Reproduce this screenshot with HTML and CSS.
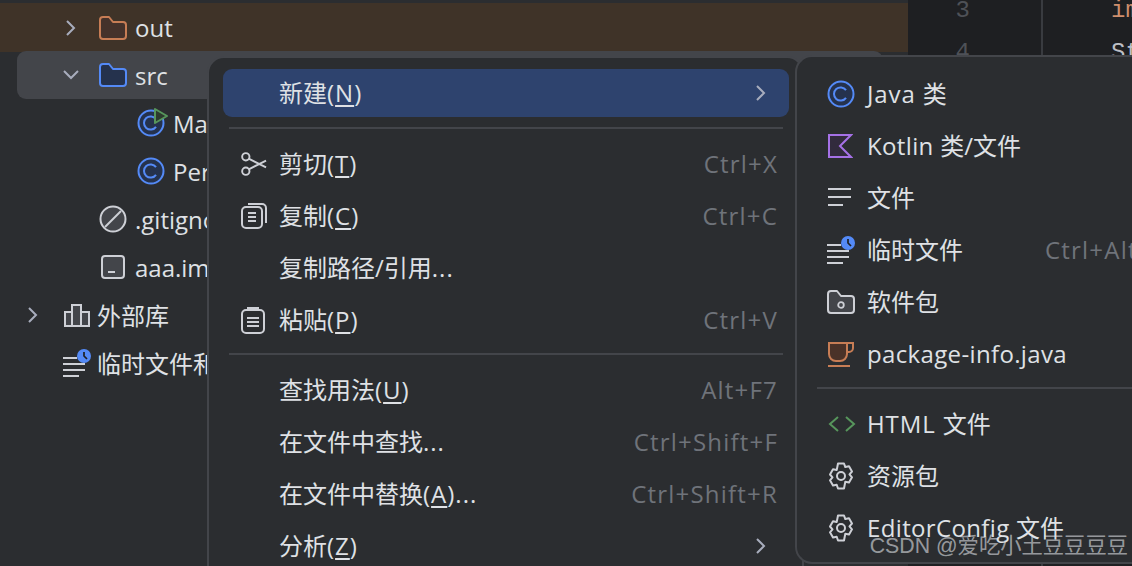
FILE: index.html
```html
<!DOCTYPE html>
<html lang="zh">
<head>
<meta charset="utf-8">
<title>IDE</title>
<link rel="stylesheet" href="styles.css">
</head>
<body>
<svg class="defs" width="0" height="0">
  <defs>
    <symbol id="i-class" viewBox="0 0 28 28"><circle cx="14" cy="14" r="12.500" fill="#25324d" stroke="#548af7" stroke-width="2"/><path d="M19 10.200a6.600 6.600 0 1 0 0 7.600" fill="none" stroke="#548af7" stroke-width="2"/></symbol>
    <symbol id="i-folder" viewBox="0 0 28 24"><path d="M1 4a3 3 0 0 1 3-3h6l4 5h10a3 3 0 0 1 3 3v11a3 3 0 0 1-3 3H4a3 3 0 0 1-3-3z" fill="currentColor" stroke-width="2" stroke="var(--line)" stroke-linejoin="round"/></symbol>
    <symbol id="i-scratch" viewBox="0 0 28 28"><path d="M0 9h14M0 15h22M0 21h22M0 27h16" stroke="#ced0d6" stroke-width="2" fill="none"/><circle cx="21" cy="7" r="7" fill="#548af7"/><path d="M21 3v4l3 3" stroke="#1e1f22" stroke-width="1.700" fill="none"/></symbol>
    <symbol id="i-gear" viewBox="0 0 28 28"><path d="M11 1.500h6l1.300 3.600 3.700-.8 3 5.200-2.500 2.900 2.500 2.900-3 5.200-3.700-.8L17 26.500h-6l-1.300-3.800-3.700.8-3-5.200 2.500-2.900L3 12.500l3-5.200 3.700.8z" fill="none" stroke="#ced0d6" stroke-width="2" stroke-linejoin="round"/><circle cx="14" cy="14" r="4" fill="none" stroke="#ced0d6" stroke-width="2"/></symbol>
    <symbol id="i-chev-r" viewBox="0 0 12 18"><path d="M2 2l7 7-7 7" fill="none" stroke="currentColor" stroke-width="2"/></symbol>
  </defs>
</svg>

<div class="topstrip"></div>
<div class="ide">
  <aside class="tree">
    <div class="row row-out">
      <span class="ind-1"><svg class="chev" width="12" height="18"><use href="#i-chev-r"/></svg></span>
      <svg class="ic folder-out" width="28" height="24"><use href="#i-folder"/></svg>
      <span>out</span>
    </div>
    <div class="row row-src">
      <span class="ind-1"><svg class="chev" width="18" height="12" viewBox="0 0 18 12"><path d="M2 2l7 7 7-7" fill="none" stroke="currentColor" stroke-width="2"/></svg></span>
      <svg class="ic folder-src" width="28" height="24"><use href="#i-folder"/></svg>
      <span>src</span>
    </div>
    <div class="row ind-2">
      <span class="icon-wrap">
        <svg class="ic" width="28" height="28"><use href="#i-class"/></svg>
        <svg class="run-badge" width="16" height="18" viewBox="0 0 16 18"><path d="M2 2l12 7L2 16z" fill="#2d3a2e" stroke="#57965c" stroke-width="2" stroke-linejoin="round"/></svg>
      </span>
      <span>Main</span>
    </div>
    <div class="row ind-2">
      <svg class="ic" width="28" height="28"><use href="#i-class"/></svg>
      <span>Person</span>
    </div>
    <div class="row ind-3">
      <svg class="ic" width="28" height="28" viewBox="0 0 28 28"><circle cx="14" cy="14" r="12.500" fill="#43454a" stroke="#ced0d6" stroke-width="2"/><path d="M6 22L22 6" stroke="#ced0d6" stroke-width="2"/></svg>
      <span>.gitignore</span>
    </div>
    <div class="row ind-3">
      <svg class="ic" width="28" height="26" viewBox="0 0 28 26"><rect x="3" y="2" width="22" height="22" rx="3" fill="#43454a" stroke="#ced0d6" stroke-width="2"/><path d="M9 18h7" stroke="#ced0d6" stroke-width="2"/></svg>
      <span>aaa.iml</span>
    </div>
    <div class="row ind-0">
      <span class="ind-1b"><svg class="chev" width="12" height="18"><use href="#i-chev-r"/></svg></span>
      <svg class="ic" width="28" height="26" viewBox="0 0 28 26"><path d="M2 10h7v14H2zM9 3h9v21H9zM18 10h8v14h-8z" fill="#43454a" stroke="#ced0d6" stroke-width="2"/></svg>
      <span>外部库</span>
    </div>
    <div class="row ind-0 ind-plain">
      <svg class="ic" width="28" height="28"><use href="#i-scratch"/></svg>
      <span>临时文件和控制台</span>
    </div>
  </aside>
  <section class="editor">
    <div class="gutter"><div class="ln">3</div><div class="ln">4</div></div>
    <div class="code"><div class="kw">import</div><div class="cl">String</div></div>
  </section>
</div>

<nav class="menu menu-main">
  <div class="item active"><span class="slot"></span><span class="label">新建<span class="lk">(<u>N</u>)</span></span><svg class="arrow" width="12" height="18"><use href="#i-chev-r"/></svg></div>
  <div class="sep sep-first"></div>
  <div class="item"><span class="slot"><svg width="26" height="26" viewBox="1 0 27 27"><g fill="none" stroke="#ced0d6" stroke-width="2"><circle cx="6" cy="6" r="3.800"/><circle cx="6" cy="21" r="3.800"/><path d="M9 8l18 9M9 19l18-9"/></g></svg></span><span class="label">剪切<span class="lk">(<u>T</u>)</span></span><span class="key">Ctrl+X</span></div>
  <div class="item"><span class="slot"><svg width="26" height="27" viewBox="1 1 26 27"><g fill="none" stroke="#ced0d6" stroke-width="2"><rect x="2" y="5" width="20" height="21" rx="4"/><path d="M8 2h14a4 4 0 0 1 4 4v15M8 11h8M8 15h8M8 19h8"/></g></svg></span><span class="label">复制<span class="lk">(<u>C</u>)</span></span><span class="key">Ctrl+C</span></div>
  <div class="item"><span class="slot"></span><span class="label">复制路径/引用<span class="lk">...</span></span></div>
  <div class="item"><span class="slot"><svg width="25" height="28" viewBox="1 0 25 28"><g fill="none" stroke="#ced0d6" stroke-width="2"><rect x="2" y="4" width="22" height="23" rx="4"/><path d="M8 4V2h10v3M7 12h12M7 16h12M7 20h12"/></g></svg></span><span class="label">粘贴<span class="lk">(<u>P</u>)</span></span><span class="key">Ctrl+V</span></div>
  <div class="sep"></div>
  <div class="item"><span class="slot"></span><span class="label">查找用法<span class="lk">(<u>U</u>)</span></span><span class="key">Alt+F7</span></div>
  <div class="item"><span class="slot"></span><span class="label">在文件中查找<span class="lk">...</span></span><span class="key">Ctrl+Shift+F</span></div>
  <div class="item"><span class="slot"></span><span class="label">在文件中替换<span class="lk">(<u>A</u>)...</span></span><span class="key">Ctrl+Shift+R</span></div>
  <div class="item"><span class="slot"></span><span class="label">分析<span class="lk">(<u>Z</u>)</span></span><svg class="arrow" width="12" height="18"><use href="#i-chev-r"/></svg></div>
</nav>

<nav class="menu menu-sub">
  <div class="item"><span class="slot"><svg width="28" height="28"><use href="#i-class"/></svg></span><span class="label"><span class="lat lat-w">Java </span>类</span></div>
  <div class="item"><span class="slot"><svg width="26" height="26" viewBox="0 0 26 26"><path d="M2 2h22L13 13l11 11H2z" fill="#322b3d" stroke="#a571e6" stroke-width="2"/></svg></span><span class="label"><span class="lat">Kotlin </span>类/文件</span></div>
  <div class="item"><span class="slot"><svg width="28" height="28" viewBox="0 0 28 28"><path d="M1 5h23M1 13h23M1 21h15" stroke="#ced0d6" stroke-width="2" fill="none"/></svg></span><span class="label">文件</span></div>
  <div class="item"><span class="slot"><svg width="28" height="28"><use href="#i-scratch"/></svg></span><span class="label">临时文件</span><span class="key">Ctrl+Alt+Shift+Insert</span></div>
  <div class="item"><span class="slot slot-pkg"><svg width="28" height="24" class="folder-pkg"><use href="#i-folder"/></svg><svg class="pkg-dot" width="8" height="8" viewBox="0 0 8 8"><circle cx="4" cy="4" r="2.800" fill="none" stroke="#ced0d6" stroke-width="1.800"/></svg></span><span class="label">软件包</span></div>
  <div class="item"><span class="slot"><svg width="28" height="26" viewBox="0 0 28 26"><path d="M2 2h18v11a7 7 0 0 1-7 7H9a7 7 0 0 1-7-7z" fill="#4a3228" stroke="#c77d55" stroke-width="2"/><path d="M20 2h6v5a4 4 0 0 1-4 4h-2M1 25h22" fill="none" stroke="#c77d55" stroke-width="2"/></svg></span><span class="label lat">package-info.java</span></div>
  <div class="sep"></div>
  <div class="item"><span class="slot"><svg width="30" height="20" viewBox="0 0 30 20"><path d="M11 3L3 10l8 7M19 3l8 7-8 7" fill="none" stroke="#57965c" stroke-width="2"/></svg></span><span class="label"><span class="lat lat-w">HTML </span>文件</span></div>
  <div class="item"><span class="slot"><svg width="28" height="28"><use href="#i-gear"/></svg></span><span class="label">资源包</span></div>
  <div class="item"><span class="slot"><svg width="28" height="28"><use href="#i-gear"/></svg></span><span class="label"><span class="lat">EditorConfig </span>文件</span></div>
</nav>

<div class="watermark">CSDN @爱吃小土豆豆豆豆</div>
</body>
</html>
```

FILE: styles.css
```css
* { box-sizing: border-box; }
html, body { margin: 0; padding: 0; height: 100%; overflow: hidden; }
body {
  background: #2b2d30;
  color: #dfe1e5;
  font-family: "Open Sans", "Noto Sans CJK SC", sans-serif;
  font-size: 24px;
  line-height: 32px;
  position: relative;
  width: 1132px;
  height: 566px;
}
.defs { position: absolute; }
.topstrip { height: 3px; background: #2b2d30; }
.ide { display: flex; height: 563px; }

.tree { width: 908px; flex: none; display: flex; flex-direction: column; }
.row { height: 48px; display: flex; align-items: center; gap: 8px; flex: none; }
.row > span:last-child { padding-top: 2px; }
.row > .icon-wrap:first-child { padding-top: 0; }
.row-out { background: #3f3328; height: 49px; }
.row-out > span:last-child { padding-top: 0; }
.row-src { background: #43454a; border-radius: 9px; margin: -1px 25px 0 17px; }
.ind-1 { width: 91px; display: flex; justify-content: flex-end; padding-right: 14px; }
.row-src .ind-1 { width: 74px; padding-right: 11px; }
.ind-2 { padding-left: 137px; }
.ind-3 { padding-left: 99px; }
.ind-0 { gap: 6px; }
.ind-plain { padding-left: 63px; }
.ind-1b { width: 57px; display: flex; justify-content: flex-start; padding-left: 27px; }
.chev { color: #a8adbd; display: block; }
.ic { flex: none; display: block; }
.folder-out { color: #45322b; --line: #c77d55; }
.folder-src { color: #25324d; --line: #548af7; }
.folder-pkg { color: #43454a; --line: #ced0d6; display: block; }
.icon-wrap { position: relative; display: block; width: 28px; height: 28px; flex: none; }
.run-badge { position: absolute; right: -4px; top: -2px; }

.editor { width: 224px; flex: none; overflow: hidden; background: #1e1f22; display: flex; height: 566px; margin-top: -3px; }
.gutter { width: 135px; flex: none; border-right: 2px solid #393b40; color: #4e5157; text-align: right; padding-right: 71px; font-family: "Liberation Mono", monospace; }
.ln { height: 42px; line-height: 22px; }
.code { padding-left: 68px; font-family: "Liberation Mono", monospace; white-space: nowrap; line-height: 22px; }
.kw { color: #cf8e6d; height: 42px; }
.cl { color: #bcbec4; }

.menu {
  position: absolute;
  background: #2b2d30;
  border: 2px solid #43454a;
  border-radius: 17px;
  display: flex;
  flex-direction: column;
  overflow: hidden;
}
.menu-main { left: 207px; top: 56px; width: 597px; height: 530px; padding: 11px 13px 0 14px; }
.menu-sub { left: 795px; top: 55px; width: 337px; height: 509px; padding: 11px 0 0 0; border-right: 0; border-top-right-radius: 0; border-bottom-right-radius: 0; }
.item { height: 52px; display: flex; align-items: center; flex: none; border-radius: 9px; white-space: nowrap; }
.menu-main .item { padding-right: 12px; }
.menu-sub .item { padding-left: 30px; }
.menu-main .active { background: #2e436e; height: 48px; }
.slot { flex: none; display: flex; align-items: center; }
.menu-main .slot { width: 38px; margin-left: 18px; }
.menu-sub .slot { width: 40px; }
.slot svg { display: block; flex: none; }
.slot-pkg { position: relative; }
.pkg-dot { position: absolute; left: 10px; top: 11px; }
.label { color: #dfe1e5; flex: none; }
.lat { letter-spacing: 0.35px; white-space: pre; }
.lat-w { letter-spacing: 0.9px; }
.lk { letter-spacing: 1px; }
u { text-underline-offset: 3px; text-decoration-thickness: 2px; }
.key { margin-left: auto; color: #6f737a; letter-spacing: 1.200px; margin-right: -1px; }
.menu-sub .key { margin-left: 82px; }
.arrow { margin-left: auto; color: #a8adbd; margin-right: 10px; }
.sep { height: 2px; background: #43454a; flex: none; }
.menu-main .sep { margin: 7px 6px 9px 6px; }
.menu-main .sep-first { margin-top: 10px; }
.menu-sub .sep { margin: 7px 0 9px 20px; }

.watermark {
  position: absolute;
  right: 4px;
  bottom: 7px;
  color: rgba(223, 225, 229, 0.62);
  font-family: "Liberation Sans", "Noto Sans CJK SC", sans-serif;
  font-size: 21.300px;
  line-height: 26px;
}
```
